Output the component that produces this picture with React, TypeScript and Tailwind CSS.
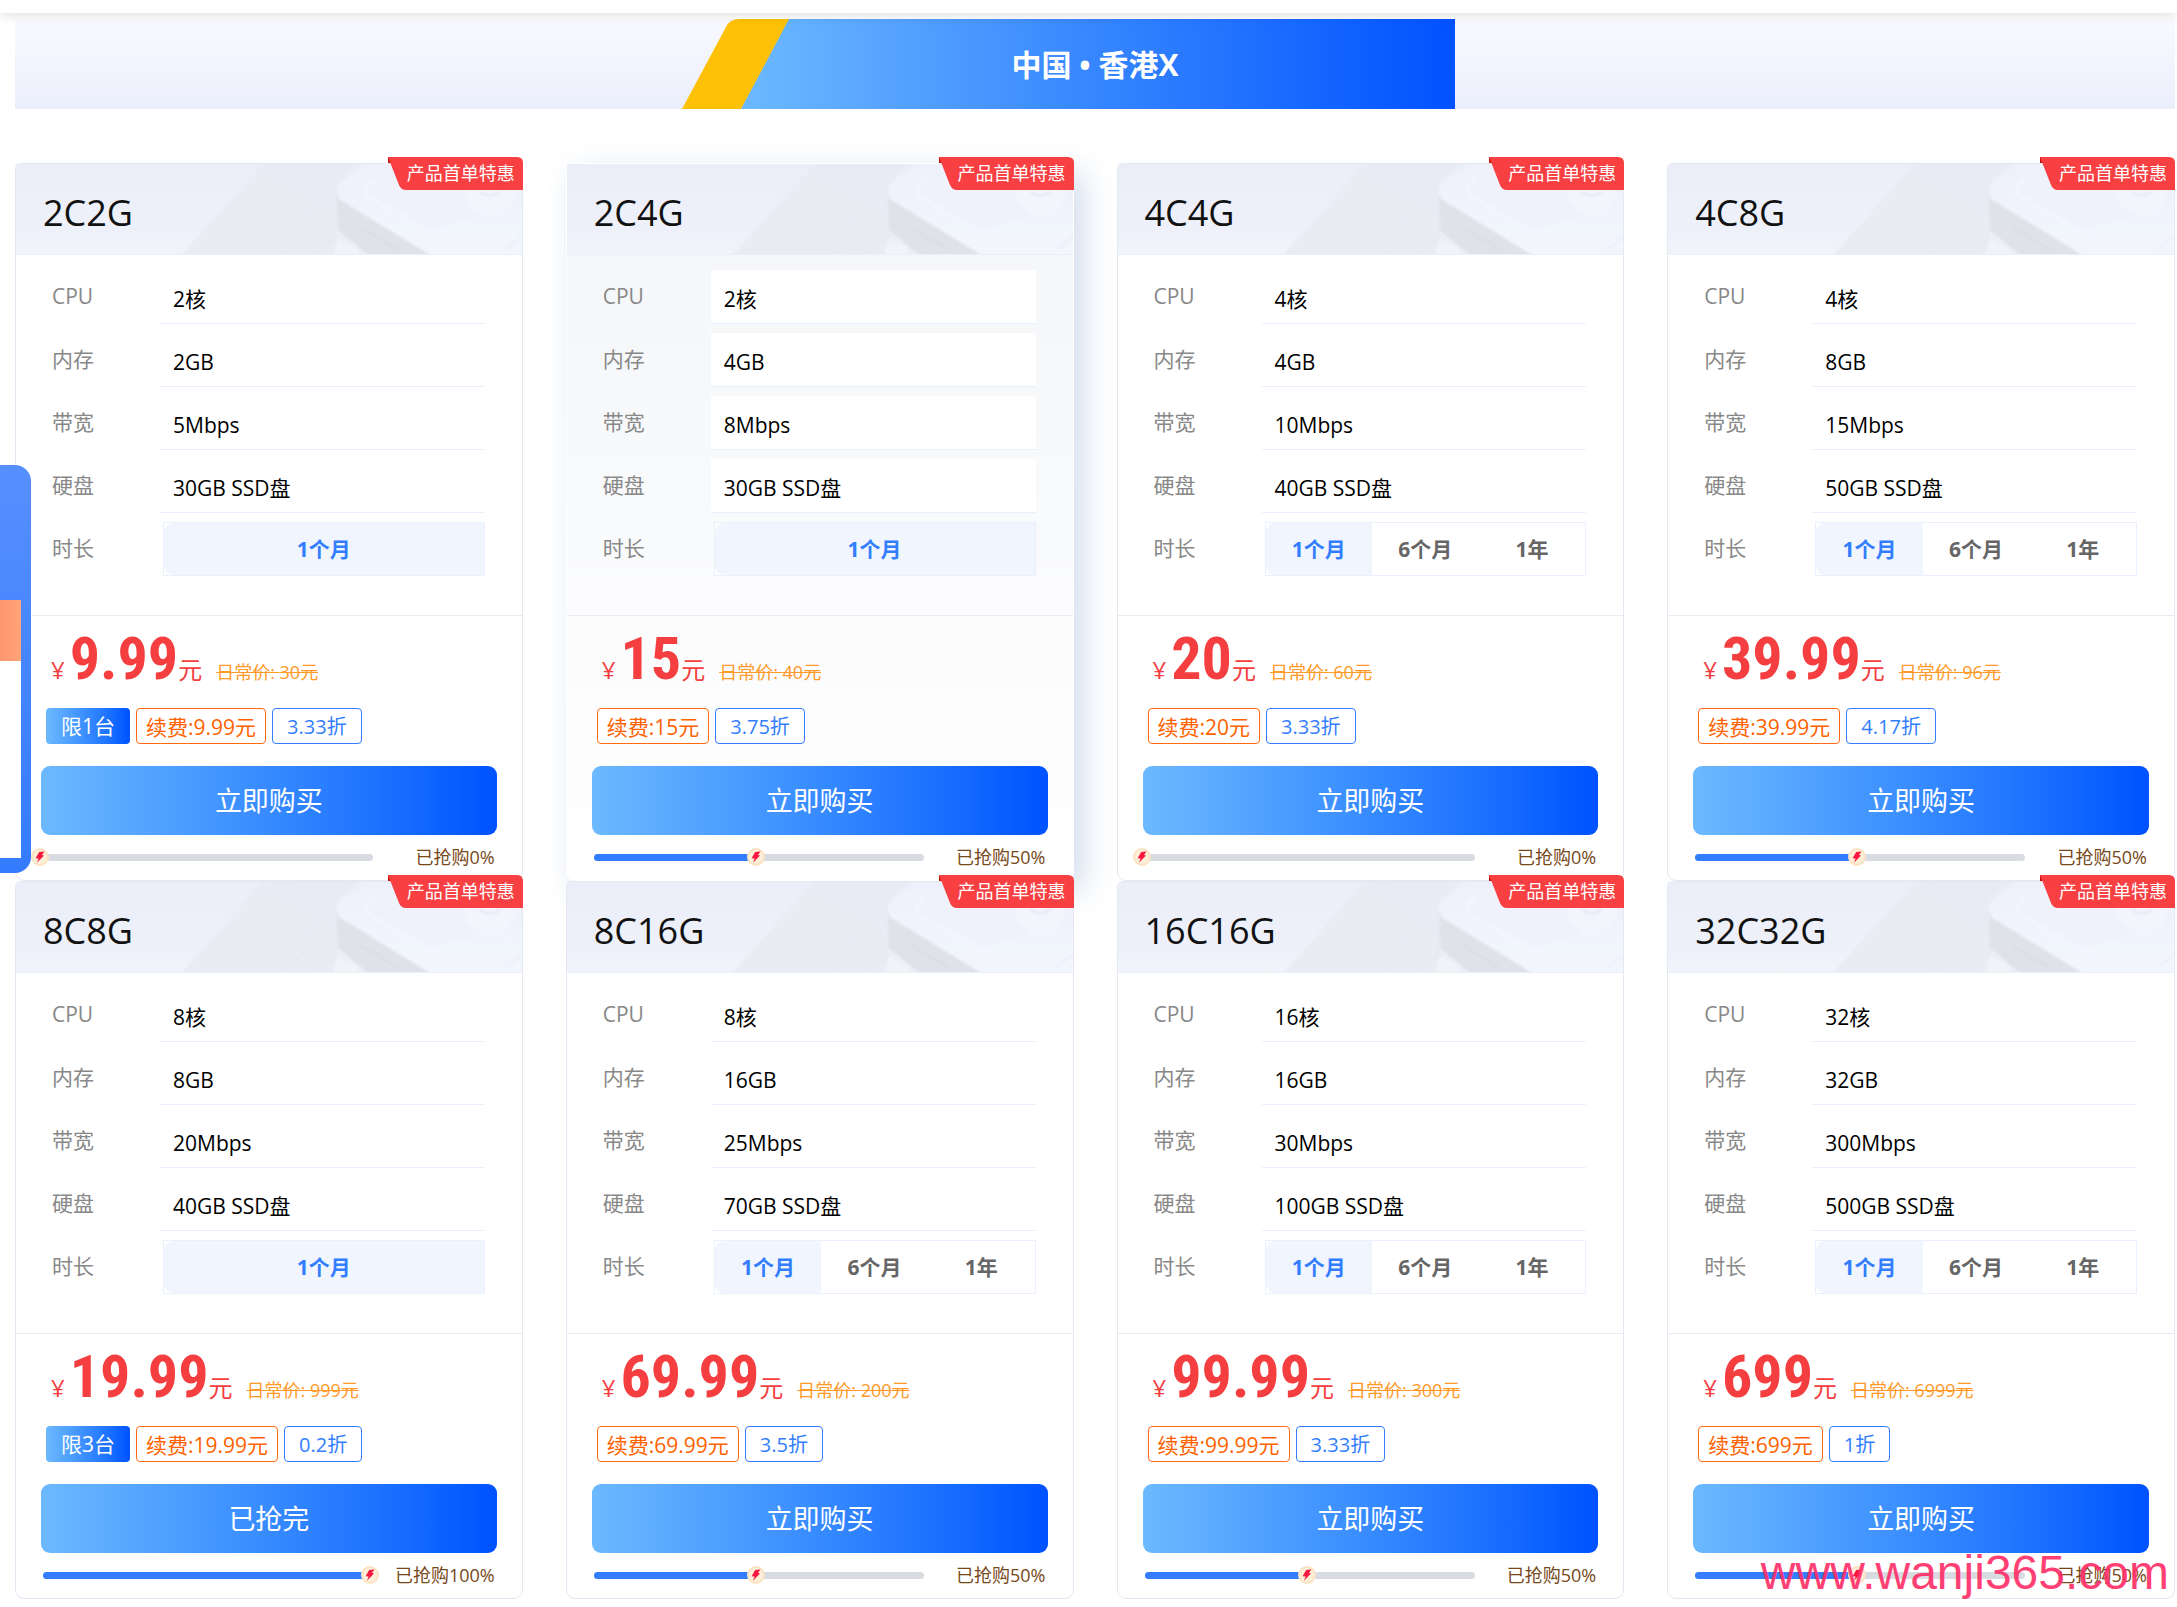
import React, { useState } from "react";

// Define the shape of a server plan
interface Plan {
  name: string;
  cpu: string;
  memory: string;
  bandwidth: string;
  disk: string;
  durations: string[];
  price: string;
  dailyPrice: string;
  limit?: number;
  discount: string;
  sold: number;
}

const ONE_MONTH = ["1个月"];
const ALL_DURATIONS = ["1个月", "6个月", "1年"];

const PLANS: Plan[] = [
  { name: "2C2G", cpu: "2核", memory: "2GB", bandwidth: "5Mbps", disk: "30GB SSD盘", durations: ONE_MONTH, price: "9.99", dailyPrice: "30", limit: 1, discount: "3.33", sold: 0 },
  { name: "2C4G", cpu: "2核", memory: "4GB", bandwidth: "8Mbps", disk: "30GB SSD盘", durations: ONE_MONTH, price: "15", dailyPrice: "40", discount: "3.75", sold: 50 },
  { name: "4C4G", cpu: "4核", memory: "4GB", bandwidth: "10Mbps", disk: "40GB SSD盘", durations: ALL_DURATIONS, price: "20", dailyPrice: "60", discount: "3.33", sold: 0 },
  { name: "4C8G", cpu: "4核", memory: "8GB", bandwidth: "15Mbps", disk: "50GB SSD盘", durations: ALL_DURATIONS, price: "39.99", dailyPrice: "96", discount: "4.17", sold: 50 },
  { name: "8C8G", cpu: "8核", memory: "8GB", bandwidth: "20Mbps", disk: "40GB SSD盘", durations: ONE_MONTH, price: "19.99", dailyPrice: "999", limit: 3, discount: "0.2", sold: 100 },
  { name: "8C16G", cpu: "8核", memory: "16GB", bandwidth: "25Mbps", disk: "70GB SSD盘", durations: ALL_DURATIONS, price: "69.99", dailyPrice: "200", discount: "3.5", sold: 50 },
  { name: "16C16G", cpu: "16核", memory: "16GB", bandwidth: "30Mbps", disk: "100GB SSD盘", durations: ALL_DURATIONS, price: "99.99", dailyPrice: "300", discount: "3.33", sold: 50 },
  { name: "32C32G", cpu: "32核", memory: "32GB", bandwidth: "300Mbps", disk: "500GB SSD盘", durations: ALL_DURATIONS, price: "699", dailyPrice: "6999", discount: "1", sold: 50 },
];

// Faint drawing of a device on the right of each card header
const HeaderArt = () => (
  <svg className="absolute inset-0 h-full w-full" viewBox="0 0 506 91" preserveAspectRatio="xMaxYMid slice" aria-hidden="true">
    <defs>
      <linearGradient id="headerBase" x1="0" y1="0" x2="0" y2="1">
        <stop offset="0" stopColor="#ebeef8" />
        <stop offset="0.75" stopColor="#eef1fa" />
        <stop offset="1" stopColor="#f1f4f9" />
      </linearGradient>
      <linearGradient id="headerBand" x1="0" y1="1" x2="1" y2="0">
        <stop offset="0" stopColor="#eaecf3" />
        <stop offset="1" stopColor="#e8ebf4" />
      </linearGradient>
      <linearGradient id="deviceTop" x1="0" y1="0" x2="0" y2="1">
        <stop offset="0" stopColor="#eef1fb" />
        <stop offset="1" stopColor="#f3f6fd" />
      </linearGradient>
      <filter id="soft" x="-10%" y="-10%" width="120%" height="120%">
        <feGaussianBlur stdDeviation="1" />
      </filter>
    </defs>
    <rect width="506" height="91" fill="url(#headerBase)" />
    <g filter="url(#soft)">
      <path d="M251 -4 H348 L322 20 V70 L354 95 H162 Z" fill="url(#headerBand)" />
      <path d="M340 0 L256 91" stroke="#eaecf4" strokeWidth="2" />
      <path d="M322 40 L266 91" stroke="#e4e6ee" strokeWidth="1" />
      <path d="M322 72 L298 91" stroke="#e4e6ee" strokeWidth="1" />
      <path d="M322 74 L340 84 L346 95 H316 Z" fill="#f1f3f8" />
      <path d="M321 30 L322 67 L356 95 H420 L345 45 Z" fill="#e1e2e9" />
      <path d="M344 64 L382 86" stroke="#dadbe3" strokeWidth="2" />
      <path d="M356 -4 L326 18 Q317 26 324 36 L420 95 H510 V-4 Z" fill="url(#deviceTop)" />
      <path d="M358 16 Q345 25 353 33 L414 66 L510 40 V-4 H384 Z" fill="#eff2fb" />
      <path d="M358 16 Q345 25 353 33 L440 82" fill="none" stroke="#f4f6fe" strokeWidth="3" />
      <ellipse cx="474" cy="30" rx="25" ry="21" fill="#f3f5fd" />
      <path d="M464 28 Q474 36 484 28" fill="none" stroke="#e8ebf5" strokeWidth="3" />
      <path d="M490 86 L510 70" stroke="#eceff8" strokeWidth="2" />
    </g>
  </svg>
);

const Ribbon = () => (
  <div className="absolute -top-[7px] -right-px h-[33px] w-[135px]">
    <svg className="absolute inset-0" width="135" height="33" viewBox="0 0 135 33" aria-hidden="true">
      <path d="M0 0 H4 V6 H0 Z" fill="#c41407" />
      <path d="M0 0 H129 Q135 0 135 6 V33 H18 Q13 33 11 28 Z" fill="#f84042" />
    </svg>
    <span className="relative block pr-2 text-right text-[18px] leading-[33px] text-white">产品首单特惠</span>
  </div>
);

const Bolt = () => (
  <svg width="18" height="18" viewBox="0 0 18 18" aria-hidden="true">
    <circle cx="9" cy="9" r="9" fill="#fbe3c3" />
    <circle cx="9" cy="9" r="7" fill="#fdeed8" />
    <path d="M8.2 4 L13.4 3.4 L11 7 L13 7.6 L6 14.8 L7.6 10.4 L4.6 10.2 Z" fill="#f9163f" />
  </svg>
);

const SpecRow = ({ label, value }: { label: string; value: string }) => (
  <div className="flex h-[54px]">
    <dt className="w-27 shrink-0 text-[21px] leading-[52px] text-[#888]">{label}</dt>
    <dd className="flex-1 border-b border-[#e9effd] bg-white pt-1 pl-[13px] text-[21px] leading-[50px] text-black">{value}</dd>
  </div>
);

const PlanCard = ({ plan, active }: { plan: Plan; active: boolean }) => {
  const [duration, setDuration] = useState(plan.durations[0]);

  return (
    <article
      className={`relative rounded-b-[9px] border ${
        active
          ? "border-white bg-linear-to-b from-[#f3f5f8] to-white shadow-[10px_10px_30px_rgba(55,99,170,0.22)]"
          : "rounded-t-[6px] border-[#e3e8f3] bg-white"
      }`}
    >
      <header className="relative h-[91px] overflow-hidden border-b border-[#e9effb]">
        <HeaderArt />
        <h3 className="relative pl-[27px] text-[36px] leading-[97px] text-[#111]">{plan.name}</h3>
      </header>
      <Ribbon />

      <dl className="flex flex-col gap-[9px] border-b border-[#e9ebef] pt-[15px] pr-[37px] pb-[39px] pl-9">
        <SpecRow label="CPU" value={plan.cpu} />
        <SpecRow label="内存" value={plan.memory} />
        <SpecRow label="带宽" value={plan.bandwidth} />
        <SpecRow label="硬盘" value={plan.disk} />
        <div className="flex h-[54px]">
          <dt className="w-27 shrink-0 text-[21px] leading-[52px] text-[#888]">时长</dt>
          <dd className="ml-[3px] flex flex-1 border border-[#e9f0fe] bg-white">
            {plan.durations.map((item) => (
              <button
                key={item}
                type="button"
                aria-pressed={item === duration}
                onClick={() => setDuration(item)}
                className={`flex-1 cursor-pointer pt-[2px] text-[21px] font-bold first:rounded-l-[9px] ${
                  item === duration ? "bg-[#f0f5fe] text-[#337eff]" : "text-[#666]"
                }`}
              >
                {item}
              </button>
            ))}
          </dd>
        </div>
      </dl>

      <div className="px-[25px] pt-[13px] pb-[11px]">
        <p className="flex items-baseline pl-[10px] text-[#f43e3f]">
          <span className="text-2xl leading-none">¥</span>
          <span className="ml-[5px] font-['Roboto_Condensed','Open_Sans',sans-serif] text-[60px] leading-[60px] font-bold">{plan.price}</span>
          <span className="text-2xl leading-none">元</span>
          <del className="ml-[14px] text-[18px] leading-none text-[#ff9a29]">日常价: {plan.dailyPrice}元</del>
        </p>

        <div className="mt-[19px] flex h-9 gap-[6px] pl-[5px] leading-[34px]">
          {plan.limit && (
            <span className="rounded bg-linear-to-r from-[#6cb9ff] to-[#0052ff] px-[15px] text-[21px] leading-9 text-white">限{plan.limit}台</span>
          )}
          <span className="rounded border border-[#ff6a13] bg-white px-[9px] text-[21px] leading-9 text-[#ff6200]">续费:{plan.price}元</span>
          <span className="rounded border border-[#337eff] bg-white px-[14px] text-[20px] leading-9 text-[#337eff]">{plan.discount}折</span>
        </div>

        <button
          type="button"
          className="mt-[22px] h-[69px] w-full cursor-pointer rounded-[9px] bg-linear-to-r from-[#6cb9ff] to-[#0052ff] pt-[2px] text-[27px] text-white"
        >
          {plan.sold === 100 ? "已抢完" : "立即购买"}
        </button>

        <div className="mt-[10px] flex h-6 items-center justify-between px-[2px]">
          <div className="relative h-[7px] w-[330px] rounded-full bg-[#d8dce2]">
            <div className="h-full rounded-full bg-[#337eff]" style={{ width: `${plan.sold}%` }} />
            <span className="absolute -top-[6px] -ml-3" style={{ left: `${plan.sold}%` }}>
              <Bolt />
            </span>
          </div>
          <span className="text-[18px] leading-6 text-[#77491a]">已抢购{plan.sold}%</span>
        </div>
      </div>
    </article>
  );
};

const RegionBanner = () => (
  <div className="mt-[6px] flex h-[90px] justify-center bg-linear-to-b from-[#f9faff] to-[#ebeffc]">
    <div className="relative w-[720px]">
      <svg className="absolute top-0 right-0" width="773" height="90" viewBox="0 0 773 90" aria-hidden="true">
        <defs>
          <linearGradient id="regionBlue" x1="60" y1="0" x2="773" y2="0" gradientUnits="userSpaceOnUse">
            <stop offset="0" stopColor="#6cb9ff" />
            <stop offset="1" stopColor="#0052ff" />
          </linearGradient>
        </defs>
        <path d="M0 90 L44 8 Q48 0 57 0 H120 V90 Z" fill="#ffc107" />
        <path d="M59 90 L107 0 H773 V90 Z" fill="url(#regionBlue)" />
      </svg>
      <h2 className="relative text-center text-[30px] leading-[92px] font-bold text-white">中国 • 香港X</h2>
    </div>
  </div>
);

export default function App() {
  return (
    <div className="relative min-h-screen overflow-hidden bg-white pb-2 font-['Open_Sans','Noto_Sans_CJK_SC',sans-serif]">
      <div className="relative z-10 h-[13px] bg-white shadow-[0_2px_12px_rgba(0,0,0,0.13)]" />

      <main className="pr-[2px] pl-[15px]">
        <RegionBanner />
        <div className="mt-[54px] grid grid-cols-4 gap-x-[43px]">
          {PLANS.map((plan) => (
            <PlanCard key={plan.name} plan={plan} active={plan.name === "2C4G"} />
          ))}
        </div>
      </main>

      {/* Side panel, docked at the left edge */}
      <aside className="fixed top-[465px] left-0 h-[408px] w-[31px] rounded-r-2xl bg-linear-to-b from-[#568fff] to-[#337bff] pt-[135px] pr-[10px] pb-[15px]">
        <div className="h-[61px] bg-linear-to-r from-[#ff9670] to-[#ffa478]" />
        <div className="h-[197px] bg-white" />
      </aside>

      <a
        href="#"
        className="absolute right-2 bottom-[10px] z-20 font-['Liberation_Sans',sans-serif] text-5xl leading-[48px] text-[#ff2b66]/90"
      >
        www.wanji365.com
      </a>
    </div>
  );
}
